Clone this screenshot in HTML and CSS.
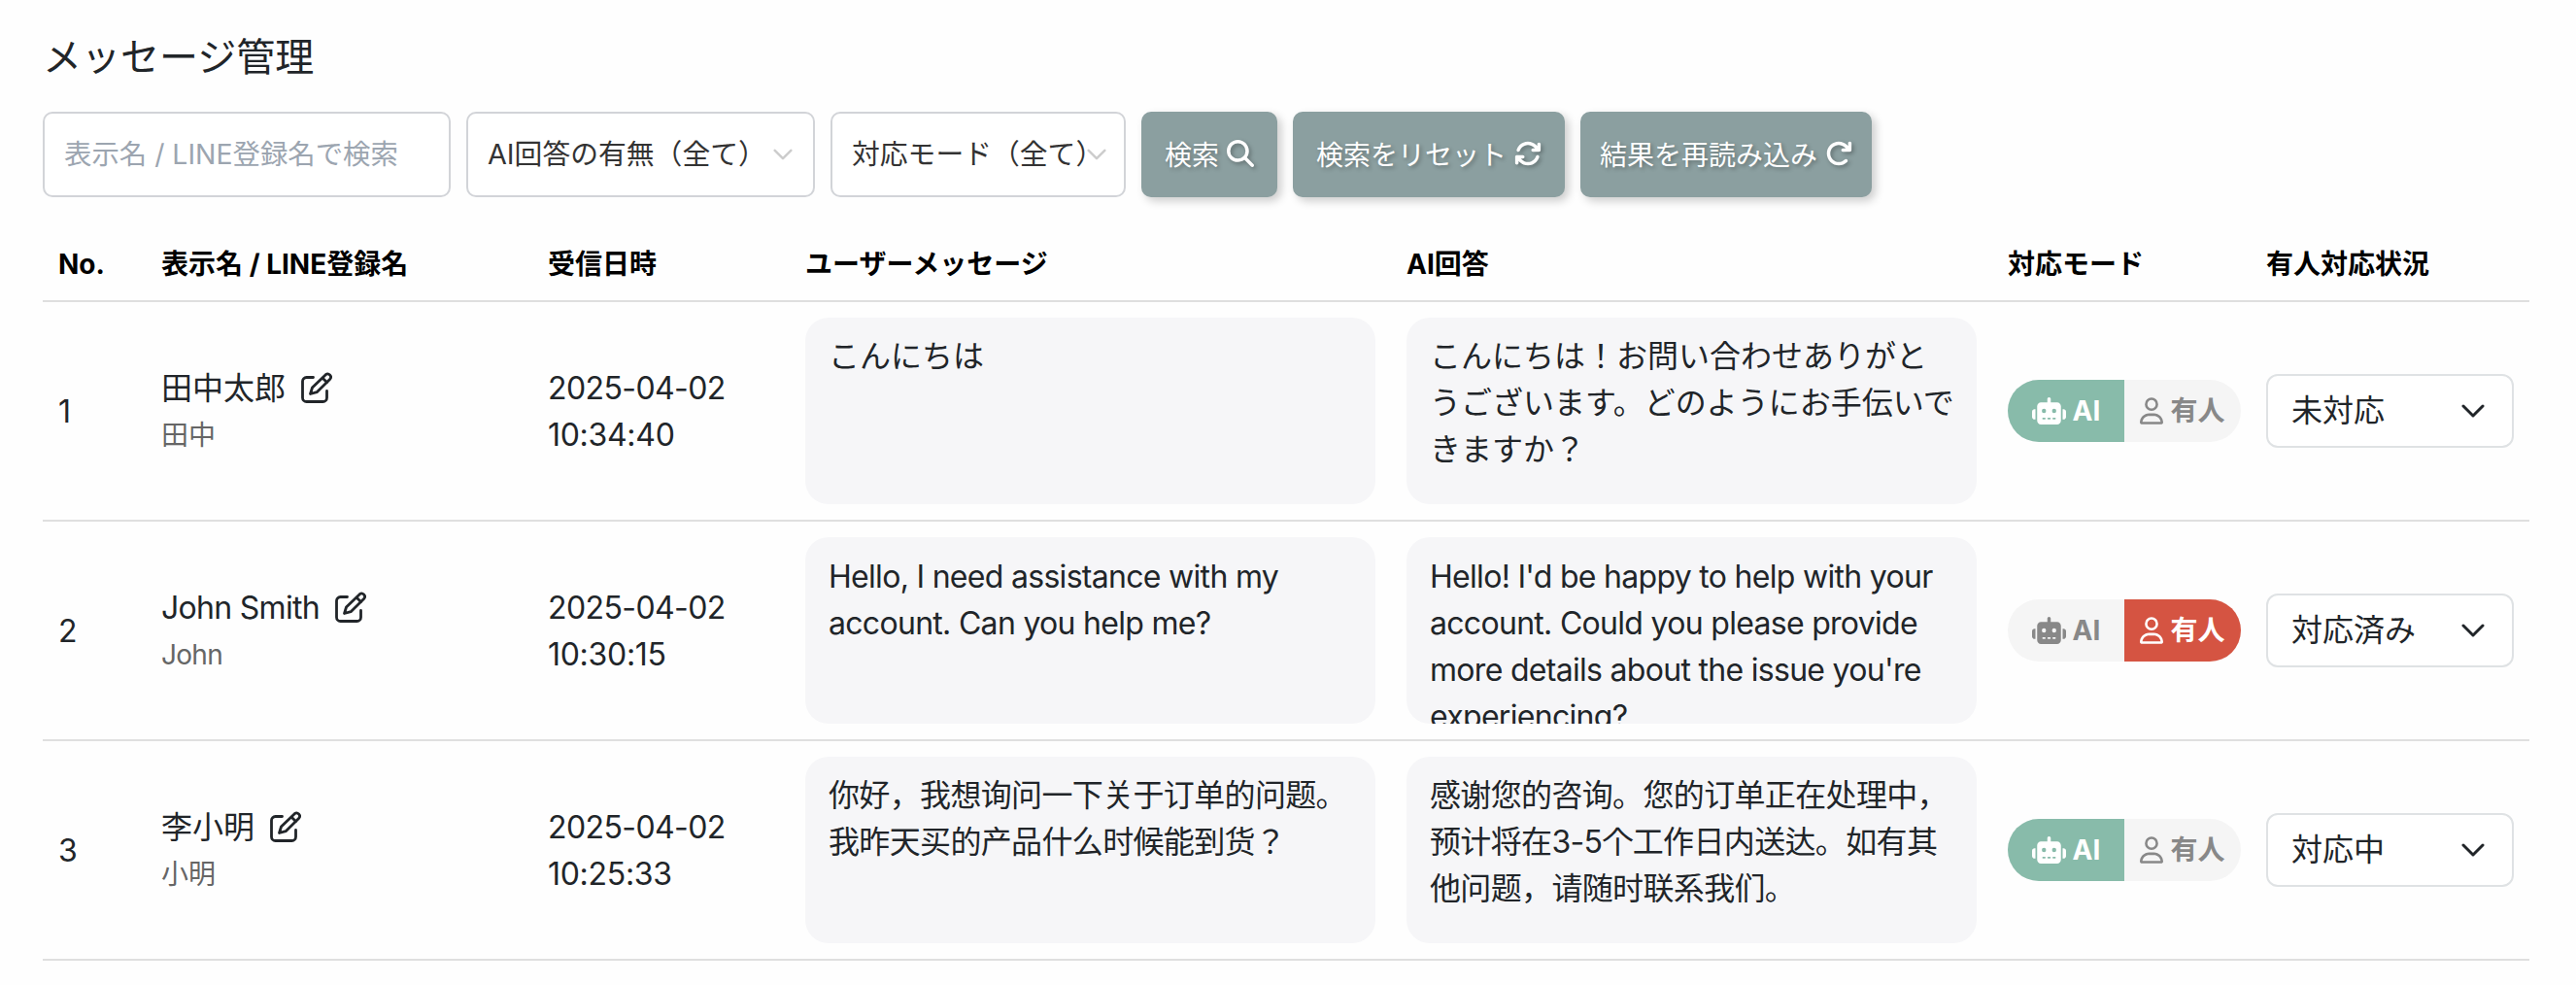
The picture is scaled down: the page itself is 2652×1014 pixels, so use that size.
FILE: index.html
```html
<!DOCTYPE html>
<html lang="ja">
<head>
  <meta charset="UTF-8">
  <meta name="viewport" content="width=device-width, initial-scale=1.0">
  <title>メッセージ管理</title>
  <link rel="stylesheet" href="styles.css">
</head>
<body>
  <!-- shared icons -->
  <svg class="icon-defs" width="0" height="0">
    <symbol id="icon-search" viewBox="0 0 512 512">
      <path d="M416 208c0 45.900-14.900 88.300-40 122.700L502.600 457.400c12.500 12.500 12.500 32.800 0 45.300s-32.800 12.500-45.300 0L330.700 376c-34.400 25.200-76.800 40-122.700 40C93.100 416 0 322.900 0 208S93.100 0 208 0S416 93.100 416 208zM208 352a144 144 0 1 0 0-288 144 144 0 1 0 0 288z"/>
    </symbol>
    <symbol id="icon-sync" viewBox="0 0 512 512">
      <path d="M105.100 202.600c7.700-21.800 20.200-42.300 37.800-59.800c62.500-62.500 163.800-62.500 226.300 0L386.300 160 352 160c-17.700 0-32 14.300-32 32s14.300 32 32 32l111.500 0c17.700 0 32-14.300 32-32l0-112c0-17.700-14.300-32-32-32s-32 14.300-32 32l0 35.200L414.400 97.600c-87.500-87.500-229.300-87.500-316.800 0C73.200 122 55.600 150.700 44.800 181.400c-5.900 16.700 2.900 34.900 19.500 40.800s34.900-2.900 40.800-19.500zM39 289.300c-5 1.500-9.800 4.200-13.700 8.200c-4 4-6.700 8.800-8.100 14c-.3 1.200-.6 2.500-.8 3.800c-.3 1.700-.4 3.400-.4 5.100L16 432c0 17.700 14.300 32 32 32s32-14.300 32-32l0-35.100 17.600 17.500c87.500 87.400 229.300 87.400 316.700 0c24.400-24.400 42.100-53.100 52.900-83.700c5.900-16.700-2.900-34.900-19.500-40.800s-34.900 2.900-40.800 19.500c-7.700 21.800-20.200 42.300-37.800 59.800c-62.500 62.500-163.800 62.500-226.300 0L125.600 352 160 352c17.700 0 32-14.300 32-32s-14.300-32-32-32L48.400 288c-1.600 0-3.200 .1-4.800 .3s-3.100 .5-4.600 1z"/>
    </symbol>
    <symbol id="icon-reload" viewBox="0 0 512 512">
      <path d="M386.300 160L336 160c-17.700 0-32 14.300-32 32s14.300 32 32 32l128 0c17.700 0 32-14.300 32-32l0-128c0-17.700-14.300-32-32-32s-32 14.300-32 32l0 51.200L414.400 97.600c-87.500-87.500-229.300-87.500-316.800 0s-87.500 229.300 0 316.800s229.300 87.500 316.800 0c12.500-12.500 12.500-32.800 0-45.300s-32.800-12.500-45.300 0c-62.500 62.500-163.800 62.500-226.300 0s-62.500-163.800 0-226.300s163.800-62.500 226.300 0L386.300 160z"/>
    </symbol>
    <symbol id="icon-edit" viewBox="0 0 32 32">
      <g fill="none" stroke="currentColor" stroke-width="2.800" stroke-linejoin="round" stroke-linecap="round">
        <path d="M12.500 5.500H5.500a4 4 0 0 0-4 4V26.500a4 4 0 0 0 4 4h17a4 4 0 0 0 4-4v-7"/>
        <path d="M9.500 22.500l2-6.500L25.300 2.700a3.200 3.200 0 0 1 4.500 4.500L16.200 20.700z"/>
        <path d="M22.200 6.200l4.300 4.300"/>
      </g>
    </symbol>
    <symbol id="icon-robot" viewBox="0 0 640 512">
      <path d="M320 0c17.700 0 32 14.300 32 32l0 64 120 0c39.800 0 72 32.200 72 72l0 272c0 39.800-32.200 72-72 72l-304 0c-39.800 0-72-32.200-72-72l0-272c0-39.800 32.200-72 72-72l120 0 0-64c0-17.700 14.300-32 32-32zM208 384c-8.800 0-16 7.200-16 16s7.200 16 16 16l32 0c8.800 0 16-7.200 16-16s-7.200-16-16-16l-32 0zm96 0c-8.800 0-16 7.200-16 16s7.200 16 16 16l32 0c8.800 0 16-7.200 16-16s-7.200-16-16-16l-32 0zm96 0c-8.800 0-16 7.200-16 16s7.200 16 16 16l32 0c8.800 0 16-7.200 16-16s-7.200-16-16-16l-32 0zM264 256a40 40 0 1 0 -80 0 40 40 0 1 0 80 0zm152 40a40 40 0 1 0 0-80 40 40 0 1 0 0 80zM48 224l16 0 0 192-16 0c-26.500 0-48-21.500-48-48l0-96c0-26.500 21.500-48 48-48zm544 0c26.500 0 48 21.500 48 48l0 96c0 26.500-21.500 48-48 48l-16 0 0-192 16 0z"/>
    </symbol>
    <symbol id="icon-user" viewBox="0 0 448 512">
      <path d="M304 128a80 80 0 1 0 -160 0 80 80 0 1 0 160 0zM96 128a128 128 0 1 1 256 0A128 128 0 1 1 96 128zM49.300 464l349.500 0c-8.900-63.300-63.300-112-129-112l-91.400 0c-65.700 0-120.100 48.700-129 112zM0 482.300C0 383.800 79.800 304 178.300 304l91.400 0C368.200 304 448 383.800 448 482.300c0 16.400-13.300 29.700-29.700 29.700L29.700 512C13.300 512 0 498.700 0 482.300z"/>
    </symbol>
    <symbol id="icon-chevron" viewBox="0 0 24 14">
      <path d="M2 2l10 10L22 2" fill="none" stroke="currentColor" stroke-width="3" stroke-linecap="round" stroke-linejoin="round"/>
    </symbol>
  </svg>

  <div class="container">
    <h1 class="page-title">メッセージ管理</h1>

    <div class="filters">
      <input type="text" class="search-input" placeholder="表示名 / LINE登録名で検索">
      <div class="filter-select filter-answer">
        <span>AI回答の有無（全て）</span>
        <svg class="filter-chevron"><use href="#icon-chevron"/></svg>
      </div>
      <div class="filter-select filter-mode">
        <span>対応モード（全て）</span>
        <svg class="filter-chevron"><use href="#icon-chevron"/></svg>
      </div>
      <button class="btn">検索<svg class="btn-icon"><use href="#icon-search"/></svg></button>
      <button class="btn">検索をリセット<svg class="btn-icon"><use href="#icon-sync"/></svg></button>
      <button class="btn btn-reload">結果を再読み込み<svg class="btn-icon"><use href="#icon-reload"/></svg></button>
    </div>

    <table class="message-table">
      <colgroup>
        <col class="col-no">
        <col class="col-name">
        <col class="col-date">
        <col class="col-message">
        <col class="col-message">
        <col class="col-mode">
        <col class="col-status">
      </colgroup>
      <thead>
        <tr>
          <th>No.</th>
          <th>表示名 / LINE登録名</th>
          <th>受信日時</th>
          <th>ユーザーメッセージ</th>
          <th>AI回答</th>
          <th>対応モード</th>
          <th>有人対応状況</th>
        </tr>
      </thead>
      <tbody>
        <tr>
          <td class="no">1</td>
          <td>
            <div class="name">田中太郎<svg class="edit-icon"><use href="#icon-edit"/></svg></div>
            <div class="line-name">田中</div>
          </td>
          <td class="date">2025-04-02<br><span class="time">10:34:40</span></td>
          <td><div class="bubble">こんにちは</div></td>
          <td><div class="bubble">こんにちは！お問い合わせありがと<br>うございます。どのようにお手伝いで<br>きますか？</div></td>
          <td>
            <div class="mode-toggle">
              <span class="mode mode-ai active"><svg class="robot-icon"><use href="#icon-robot"/></svg>AI</span>
              <span class="mode mode-human"><svg class="user-icon"><use href="#icon-user"/></svg>有人</span>
            </div>
          </td>
          <td><div class="status-select"><span>未対応</span><svg class="status-chevron"><use href="#icon-chevron"/></svg></div></td>
        </tr>
        <tr>
          <td class="no">2</td>
          <td>
            <div class="name latin">John Smith<svg class="edit-icon"><use href="#icon-edit"/></svg></div>
            <div class="line-name latin">John</div>
          </td>
          <td class="date">2025-04-02<br><span class="time">10:30:15</span></td>
          <td><div class="bubble latin">Hello, I need assistance with my account. Can you help me?</div></td>
          <td><div class="bubble latin">Hello! I'd be happy to help with your account. Could you please provide more details about the issue you're experiencing?</div></td>
          <td>
            <div class="mode-toggle">
              <span class="mode mode-ai"><svg class="robot-icon"><use href="#icon-robot"/></svg>AI</span>
              <span class="mode mode-human active"><svg class="user-icon"><use href="#icon-user"/></svg>有人</span>
            </div>
          </td>
          <td><div class="status-select"><span>対応済み</span><svg class="status-chevron"><use href="#icon-chevron"/></svg></div></td>
        </tr>
        <tr>
          <td class="no">3</td>
          <td>
            <div class="name">李小明<svg class="edit-icon"><use href="#icon-edit"/></svg></div>
            <div class="line-name">小明</div>
          </td>
          <td class="date">2025-04-02<br><span class="time">10:25:33</span></td>
          <td><div class="bubble chinese">你好，我想询问一下关于订单的问题。我昨天买的产品什么时候能到货？</div></td>
          <td><div class="bubble chinese">感谢您的咨询。您的订单正在处理中，预计将在3-5个工作日内送达。如有其他问题，请随时联系我们。</div></td>
          <td>
            <div class="mode-toggle">
              <span class="mode mode-ai active"><svg class="robot-icon"><use href="#icon-robot"/></svg>AI</span>
              <span class="mode mode-human"><svg class="user-icon"><use href="#icon-user"/></svg>有人</span>
            </div>
          </td>
          <td><div class="status-select"><span>対応中</span><svg class="status-chevron"><use href="#icon-chevron"/></svg></div></td>
        </tr>
      </tbody>
    </table>
  </div>
</body>
</html>
```
FILE: styles.css
```css
* {
  box-sizing: border-box;
}

body {
  margin: 0;
  background-color: #fefefe;
  color: #212529;
  font-family: Inter, "Noto Sans CJK JP", sans-serif;
  font-size: 32px;
  line-height: 48px;
}

svg {
  fill: currentColor;
  flex-shrink: 0;
}

.icon-defs {
  display: block;
}

.container {
  width: 2560px;
  margin-left: 44px;
  padding-top: 35px;
}

.page-title {
  margin: 0 0 32px;
  font-size: 40px;
  font-weight: 400;
  line-height: 48px;
}

/* search filters */
.filters {
  display: flex;
  gap: 16px;
  height: 88px;
}

.search-input,
.filter-select {
  border: 2px solid #d2d4d8;
  border-radius: 10px;
  background-color: #fff;
  padding: 0 20px;
  font-family: inherit;
  font-size: 28.8px;
  color: #333;
}

.search-input {
  width: 420px;
  padding-bottom: 2px;
  font-size: 28.4px;
}

.search-input::placeholder {
  color: #9ca5b0;
}

.filter-select {
  display: flex;
  align-items: center;
  justify-content: space-between;
  white-space: nowrap;
}

.filter-select span {
  width: 0;
}

.filter-answer {
  width: 359px;
  padding-right: 21px;
}

.filter-mode {
  width: 304px;
  padding-right: 18px;
}

.filter-chevron {
  width: 20px;
  height: 12px;
  color: #ccc;
}

.btn {
  display: flex;
  align-items: center;
  gap: 8px;
  padding: 0 24px 2px;
  border: none;
  border-radius: 10px;
  background-color: #8b9fa0;
  color: #fff;
  font-family: inherit;
  font-size: 28px;
  text-shadow: 2px 2px 4px rgba(0, 0, 0, 0.3);
  box-shadow: 4px 4px 10px rgba(0, 0, 0, 0.2);
  white-space: nowrap;
  cursor: pointer;
}

.btn-reload {
  padding: 0 20px 2px;
}

.btn-icon {
  width: 28px;
  height: 28px;
  filter: drop-shadow(2px 2px 2px rgba(0, 0, 0, 0.3));
}

/* message list */
.message-table {
  width: 2560px;
  margin-top: 28px;
  table-layout: fixed;
  border-collapse: separate;
  border-spacing: 0;
}

.col-no {
  width: 106px;
}

.col-name {
  width: 398px;
}

.col-date {
  width: 265px;
}

.col-message {
  width: 619px;
}

.col-mode {
  width: 266px;
}

.col-status {
  width: 287px;
}

.message-table th {
  height: 80px;
  padding: 4px 16px 0;
  border-bottom: 2px solid #dfdfdf;
  color: #000;
  font-size: 28px;
  font-weight: 700;
  text-align: left;
}

.message-table td {
  height: 226px;
  padding: 16px;
  border-bottom: 2px solid #dfdfdf;
  vertical-align: middle;
}

.message-table .no,
.message-table .date {
  padding-top: 18px;
}

.date {
  letter-spacing: -0.6px;
}

.time {
  letter-spacing: -0.3px;
}

.latin {
  letter-spacing: -0.7px;
}

.chinese {
  letter-spacing: -0.65px;
}

.name {
  display: flex;
  align-items: center;
  padding-top: 2px;
}

.edit-icon {
  width: 32px;
  height: 32px;
  margin-left: 16px;
  margin-bottom: 2px;
}

.line-name {
  color: #666;
  font-size: 28px;
}

.bubble {
  height: 192px;
  padding: 16px 16px 0 24px;
  border-radius: 24px;
  background-color: #f6f6f8;
  overflow: hidden;
}

.bubble.latin {
  padding-top: 17px;
}

.mode-toggle {
  display: flex;
  width: 240px;
  height: 64px;
  border-radius: 32px;
  background-color: #f5f5f5;
  overflow: hidden;
}

.mode {
  display: flex;
  align-items: center;
  justify-content: center;
  gap: 7px;
  width: 120px;
  color: #888;
  font-size: 28px;
  font-weight: 700;
}

.mode.active {
  color: #fff;
}

.mode-ai.active {
  background-color: #88bbaa;
}

.mode-human.active {
  background-color: #d55442;
}

.robot-icon {
  width: 35px;
  height: 28px;
}

.user-icon {
  width: 24px;
  height: 28px;
}

.status-select {
  display: flex;
  align-items: center;
  justify-content: space-between;
  width: 255px;
  height: 76px;
  padding: 0 28px 0 24px;
  border: 2px solid #dfe2e4;
  border-radius: 12px;
  background-color: #fff;
}

.status-chevron {
  width: 24px;
  height: 14px;
}
```
